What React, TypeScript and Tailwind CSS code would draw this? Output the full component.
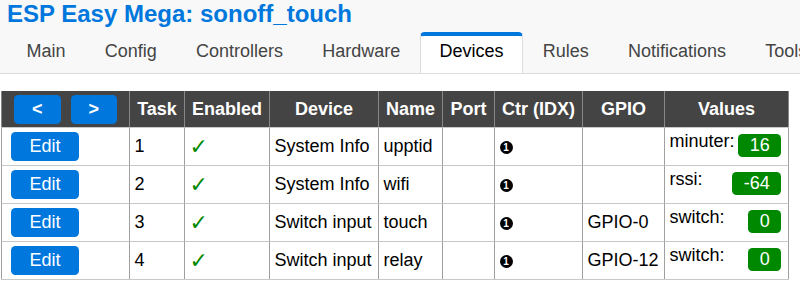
import React from "react";

const tabs = ["Main", "Config", "Controllers", "Hardware", "Devices", "Rules", "Notifications", "Tools"];

type Row = {
  task: string;
  device: string;
  name: string;
  gpio: string;
  label: string;
  value: string;
};

const rows: Row[] = [
  { task: "1", device: "System Info", name: "upptid", gpio: "", label: "minuter:", value: "16" },
  { task: "2", device: "System Info", name: "wifi", gpio: "", label: "rssi:", value: "-64" },
  { task: "3", device: "Switch input", name: "touch", gpio: "GPIO-0", label: "switch:", value: "0" },
  { task: "4", device: "Switch input", name: "relay", gpio: "GPIO-12", label: "switch:", value: "0" },
];

const grid = "grid grid-cols-[128px_55px_85px_109px_64px_52px_88px_82px_125px]";
const th = "h-[36px] bg-[#444444] border-l border-[#888888] flex items-center justify-center font-bold text-white leading-[21px]";
const td = "h-[38px] border-t border-t-[#c8c8c8] border-l border-l-[#a0a0a0] flex items-center pl-[4.5px] leading-[21px]";

export default function App() {
  return (
    <div className="w-[800px] h-[289px] overflow-hidden bg-white text-[18px] text-black font-['Liberation_Sans',Arial,sans-serif]">
      <div className="h-[74px] bg-[#f8f8f8] border-b border-[#dddddd] pl-[7px]">
        <h1 className="h-[32px] text-[24px] font-bold text-[#0077dd] leading-[27px] whitespace-nowrap">
          ESP Easy Mega: sonoff_touch
        </h1>
        <div className="flex h-[41px] overflow-hidden whitespace-nowrap">
          {tabs.map((t) => {
            const active = t === "Devices";
            return (
              <div
                key={t}
                className={
                  active
                    ? "flex-none px-[18.6px] pt-[4.5px] leading-[21px] border-t-4 border-x border-t-[#0077dd] border-x-[#dddddd] rounded-t-[4.5px] bg-white text-black"
                    : "flex-none px-[18.6px] pt-[4.5px] leading-[21px] border-t-4 border-x border-transparent rounded-t-[4.5px] text-[#444444]"
                }
              >
                {t}
              </div>
            );
          })}
        </div>
      </div>

      <div className="pt-[17px] pl-[1px]">
        <div className={grid + " w-[788px]"}>
          <div className={th + " gap-[10px]"}>
            <span className="bg-[#0077dd] text-white rounded-[4.5px] px-[18px] py-[4px] leading-[21px]">&lt;</span>
            <span className="bg-[#0077dd] text-white rounded-[4.5px] px-[18px] py-[4px] leading-[21px]">&gt;</span>
          </div>
          <div className={th}>Task</div>
          <div className={th}>Enabled</div>
          <div className={th}>Device</div>
          <div className={th}>Name</div>
          <div className={th}>Port</div>
          <div className={th}>Ctr (IDX)</div>
          <div className={th}>GPIO</div>
          <div className={th + " border-r"}>Values</div>
        </div>
        <div className={grid + " w-[788px] border-b border-[#c8c8c8]"}>
          {rows.map((r) => (
            <React.Fragment key={r.task}>
              <div className={td + " pl-[9px]"}>
                <span className="bg-[#0077dd] text-white rounded-[4.5px] px-[18.5px] py-[4px] leading-[21px]">Edit</span>
              </div>
              <div className={td}>{r.task}</div>
              <div className={td}>
                <span className="text-[#008800] font-['DejaVu_Sans',sans-serif] text-[22px] leading-none mt-[1px]">✓</span>
              </div>
              <div className={td + " whitespace-nowrap"}>{r.device}</div>
              <div className={td}>{r.name}</div>
              <div className={td}></div>
              <div className={td}>
                <span className="w-[13px] h-[13px] mt-[2px] rounded-full bg-black text-white text-[10px] leading-none font-bold flex items-center justify-center">
                  1
                </span>
              </div>
              <div className={td + " whitespace-nowrap"}>{r.gpio}</div>
              <div className={td + " border-r border-r-[#a0a0a0] items-start justify-between pr-[7px]"}>
                <span className="mt-[2.5px] leading-[21px]">{r.label}</span>
                <span className="mt-[6px] bg-[#008800] text-white rounded-[4.5px] px-[11.25px] py-[1px] leading-[21px]">
                  {r.value}
                </span>
              </div>
            </React.Fragment>
          ))}
        </div>
      </div>
    </div>
  );
}
